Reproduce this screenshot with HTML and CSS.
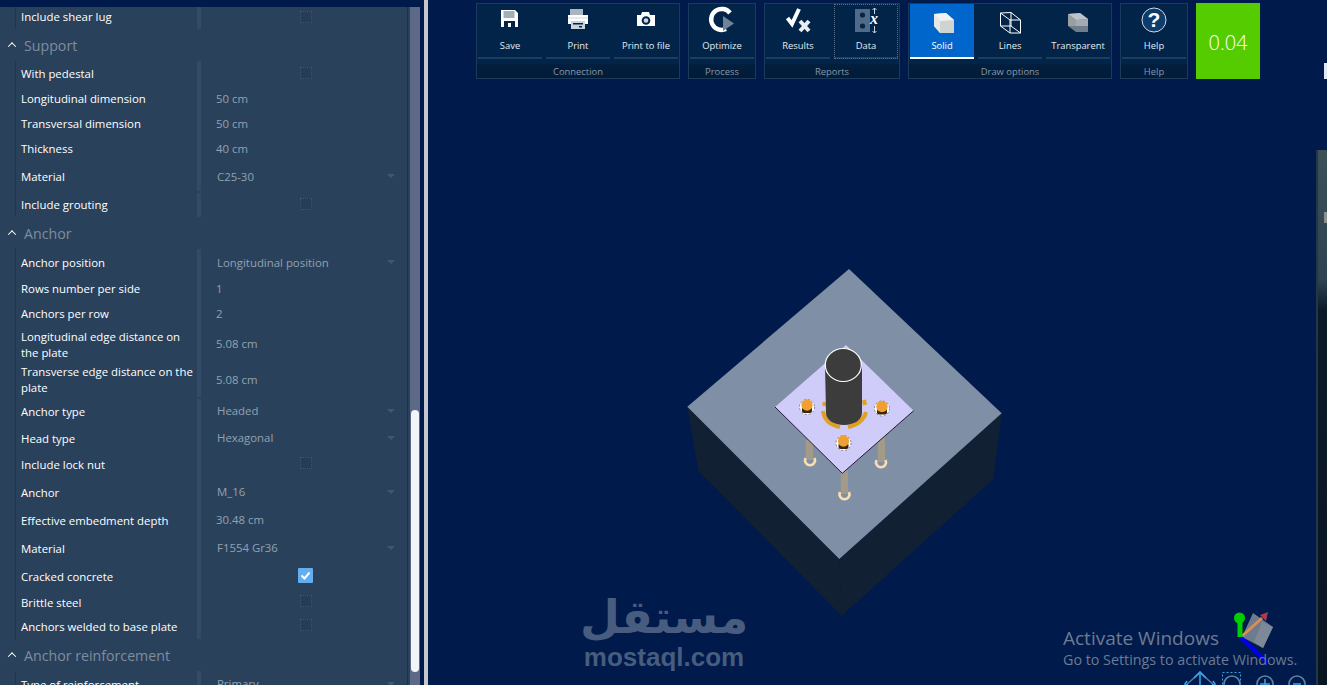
FILE: index.html
```html
<!DOCTYPE html>
<html lang="en">
<head>
<meta charset="utf-8">
<title>Base plate design</title>
<link rel="stylesheet" href="styles.css">
</head>
<body>
<div class="app">
  <aside class="panel">
    <div class="panel-body">
      <div class="props">
        <div class="row h22 up"><div class="label">Include shear lug</div><div class="value"><span class="check"></span></div></div>
      </div>
      <div class="section"><span class="chev"></span><span>Support</span></div>
      <div class="props">
        <div class="row h26"><div class="label">With pedestal</div><div class="value"><span class="check"></span></div></div>
        <div class="row h25 up-label"><div class="label">Longitudinal dimension</div><div class="value">50 cm</div></div>
        <div class="row h25 up-label"><div class="label">Transversal dimension</div><div class="value">50 cm</div></div>
        <div class="row h25 up-label"><div class="label">Thickness</div><div class="value">40 cm</div></div>
        <div class="row h29"><div class="label">Material</div><div class="value drop flat">C25-30</div></div>
        <div class="row h26 down"><div class="label">Include grouting</div><div class="value"><span class="check"></span></div></div>
      </div>
      <div class="section"><span class="chev"></span><span>Anchor</span></div>
      <div class="props">
        <div class="row h28"><div class="label">Anchor position</div><div class="value drop flat">Longitudinal position</div></div>
        <div class="row h25 up-label"><div class="label">Rows number per side</div><div class="value">1</div></div>
        <div class="row h25 up-label"><div class="label">Anchors per row</div><div class="value">2</div></div>
        <div class="row h35"><div class="label">Longitudinal edge distance on the plate</div><div class="value">5.08 cm</div></div>
        <div class="row h35"><div class="label">Transverse edge distance on the plate</div><div class="value flat">5.08 cm</div></div>
        <div class="row h28 down"><div class="label">Anchor type</div><div class="value drop">Headed</div></div>
        <div class="row h27"><div class="label">Head type</div><div class="value drop">Hexagonal</div></div>
        <div class="row h26"><div class="label">Include lock nut</div><div class="value nudge"><span class="check"></span></div></div>
        <div class="row h29"><div class="label">Anchor</div><div class="value drop">M_16</div></div>
        <div class="row h28"><div class="label">Effective embedment depth</div><div class="value">30.48 cm</div></div>
        <div class="row h28"><div class="label">Material</div><div class="value drop">F1554 Gr36</div></div>
        <div class="row h27"><div class="label">Cracked concrete</div><div class="value"><span class="check on"><svg viewBox="0 0 15 15" width="15" height="15"><path d="M3.5 7.5l3 3 5-6" fill="none" stroke="#fff" stroke-width="2"/></svg></span></div></div>
        <div class="row h25"><div class="label">Brittle steel</div><div class="value nudge"><span class="check"></span></div></div>
        <div class="row h24"><div class="label">Anchors welded to base plate</div><div class="value nudge"><span class="check"></span></div></div>
      </div>
      <div class="section"><span class="chev"></span><span>Anchor reinforcement</span></div>
      <div class="props">
        <div class="row h28"><div class="label">Type of reinforcement</div><div class="value drop">Primary</div></div>
      </div>
    </div>
    <div class="track"><div class="thumb"></div></div>
  </aside>
  <div class="gap"></div>
  <div class="divider"></div>
  <main class="view">
    <svg class="scene" viewBox="428 0 899 685" aria-hidden="true">
      <polygon points="687.3,406.7 698.3,470.7 841.7,615.7 839.3,559" fill="#122033"/>
      <polygon points="1001.7,413.3 993.3,479 841.7,615.7 839.3,559" fill="#122033"/>
      <polygon points="849,269 1001.7,413.3 839.3,559 687.3,406.7" fill="#7f8fa5"/>
      <g fill="#a39a88">
        <rect x="805.7" y="440" width="7.3" height="20"/>
        <rect x="877.7" y="438" width="7.3" height="24"/>
        <rect x="840.7" y="470" width="7.3" height="24"/>
      </g>
      <g fill="none" stroke="#fddcb0" stroke-width="2.6">
        <path d="M805.5 458a5 5 0 1 0 9 0"/>
        <path d="M876.5 460a5 5 0 1 0 9 0"/>
        <path d="M840 492a5 5 0 1 0 9 0"/>
      </g>
      <polygon points="775,407 842.3,473.3 913.7,410.7 846,345" fill="#d0ccfa"/>
      <path d="M775 407L842.3 473.3L913.7 410.7" fill="none" stroke="#2a1a3a" stroke-width="1"/>
      <g fill="none" stroke="#dfa11e" stroke-width="4">
        <path d="M823 411c1 8 7 14 17 16"/>
        <path d="M848 427c9-2 16-7 18-15"/>
        <path d="M825 402l-1 4M864 400l1 5"/>
      </g>
      <path d="M825 365h37v48c0 7-8 12-18 12s-18-5-18-12z" fill="#3c3c3c"/>
      <ellipse cx="843.3" cy="365" rx="18" ry="16.5" fill="#3c3c3c" stroke="#fff" stroke-width="1.2"/>
      <g>
        <g>
          <circle cx="807" cy="407" r="7.5" fill="#fff" stroke="#222" stroke-width=".5" stroke-dasharray="2 2"/>
          <rect x="802" y="407" width="10" height="6" rx="2" fill="#3a2410"/>
          <circle cx="807" cy="405" r="5.7" fill="#f0a030"/>
        </g>
        <g>
          <circle cx="882" cy="408.5" r="7.5" fill="#fff" stroke="#222" stroke-width=".5" stroke-dasharray="2 2"/>
          <rect x="877" y="408.5" width="10" height="6" rx="2" fill="#3a2410"/>
          <circle cx="882" cy="406.5" r="5.7" fill="#f0a030"/>
        </g>
        <g>
          <circle cx="843.5" cy="443" r="7.5" fill="#fff" stroke="#222" stroke-width=".5" stroke-dasharray="2 2"/>
          <rect x="838.5" y="443" width="10" height="6" rx="2" fill="#3a2410"/>
          <circle cx="843.5" cy="441" r="5.7" fill="#f0a030"/>
        </g>
      </g>
      <polygon points="1253,613 1273,627 1263,648 1242,637" fill="#6f7a8c"/>
      <polygon points="1273,627 1263,648 1254,642 1262,622" fill="#7d8899"/>
      <path d="M1241 637L1262 618" stroke="#d88f50" stroke-width="3"/>
      <polygon points="1260,615 1268,612 1266,621" fill="#b03a50"/>
      <path d="M1240 637L1268 663" stroke="#0000ee" stroke-width="4"/>
      <path d="M1240 637V620" stroke="#00d000" stroke-width="5"/>
      <circle cx="1239.5" cy="618" r="5.5" fill="#00d000"/>
      <g fill="none" stroke="#60809f" stroke-width="1.6">
        <path d="M1187 684l13-11 13 11" stroke="#4c7aa6"/>
        <path d="M1200 672v13M1194 678l6-6 6 6M1187 681l-2 3 3 1M1213 681l2 3-3 1" stroke="#3aa0e0"/>
        <rect x="1222.5" y="672.5" width="18" height="14" stroke="#3aa0e0" stroke-dasharray="2 2" stroke-width="1"/>
        <circle cx="1232" cy="684" r="8"/>
        <circle cx="1265" cy="684" r="8"/>
        <path d="M1265 679v10M1260 684h10" stroke="#3aa0e0"/>
        <circle cx="1297" cy="684" r="8"/>
        <path d="M1293 684h8" stroke="#3aa0e0"/>
      </g>
    </svg>

    <div class="edge"></div>
    <div class="edge-glyph"></div>
    <div class="edge-glyph low"></div>

    <div class="toolbar">
      <section class="group">
        <div class="btns">
          <div class="btn"><svg class="ico" viewBox="0 0 40 32"><path d="M11 4h14l3 3v14H11z" fill="#fff"/><rect x="13.500" y="5" width="11" height="7" fill="#9fb0b8"/><rect x="14" y="15" width="11" height="6" fill="#022448"/><rect x="18" y="17" width="3" height="4" fill="#fff"/></svg><span>Save</span></div>
          <div class="btn"><svg class="ico" viewBox="0 0 40 32"><rect x="12" y="3" width="13" height="6" fill="#a9b6bf"/><path d="M10 9h20v9H10z" fill="#fff"/><path d="M10 11h20v2H10z" fill="#e6ebef"/><rect x="13" y="15" width="14" height="8" fill="#c8d3da"/><rect x="15" y="17" width="10" height="1.500" fill="#022448"/><rect x="21" y="20" width="3" height="1.500" fill="#022448"/></svg><span>Print</span></div>
          <div class="btn"><svg class="ico" viewBox="0 0 40 32"><path d="M11 9h4l1-3h7l1 3h5v11H11z" fill="#fff"/><circle cx="20" cy="14.500" r="4.300" fill="#022448"/><circle cx="20" cy="14.500" r="2.300" fill="#cdd6dc"/></svg><span>Print to file</span></div>
        </div>
        <div class="foot">Connection</div>
      </section>
      <section class="group">
        <div class="btns">
          <div class="btn"><svg class="ico" viewBox="0 0 40 32"><path d="M28 7A10.500 10.500 0 1 0 24 23" fill="none" stroke="#fff" stroke-width="4.500"/><path d="M21 10v15l11-7.500z" fill="#6f8499"/></svg><span>Optimize</span></div>
        </div>
        <div class="foot">Process</div>
      </section>
      <section class="group">
        <div class="btns">
          <div class="btn"><svg class="ico" viewBox="0 0 40 32"><path d="M9.500 12l4.500 6L21 3" fill="none" stroke="#fff" stroke-width="4"/><path d="M22 15l9 10M31 15l-9 10" stroke="#e8edf1" stroke-width="4"/></svg><span>Results</span></div>
          <div class="btn dotted"><svg class="ico" viewBox="0 0 40 32"><rect x="9" y="3" width="15" height="23" fill="#4d6b8c"/><circle cx="16.500" cy="9" r="2.600" fill="#0e2238"/><circle cx="16.500" cy="20" r="2.600" fill="#0e2238"/><path d="M28.500 2v6M28.500 20v7M26.500 4l2-2 2 2M26.500 25l2 2 2-2" fill="none" stroke="#c6d2dc" stroke-width="1"/><text x="28" y="18" class="ix">x</text></svg><span>Data</span></div>
        </div>
        <div class="foot">Reports</div>
      </section>
      <section class="group">
        <div class="btns">
          <div class="btn active"><svg class="ico" viewBox="0 0 40 32"><polygon points="12,8 24,7 32,14 32,27 18,27 12,20" fill="#cfd4d2"/><polygon points="12,8 24,7 32,14 18,15" fill="#f1f3f3"/><polygon points="12,8 18,15 18,27 12,20" fill="#e6e8e8"/></svg><span>Solid</span></div>
          <div class="btn"><svg class="ico" viewBox="0 0 40 32"><g fill="none" stroke="#fff" stroke-width="1"><polygon points="10.500,7 21,6.500 30.500,14 30.500,27 20,27 10.500,20"/><path d="M10.500 7L20 14v13M20 14h10.500M21 6.500V20M10.500 20H21l9.500 7"/></g></svg><span>Lines</span></div>
          <div class="btn"><svg class="ico" viewBox="0 0 40 32"><polygon points="10,8 22,7 30,13 30,26 18,26 10,20" fill="#6f7d8d"/><polygon points="10,8 22,7 30,13 18,14" fill="#bcc3ca"/><polygon points="18,14 30,13 30,20 18,20" fill="#a3acb5"/><polygon points="10,8 18,14 18,20 10,20" fill="#98a09f"/></svg><span>Transparent</span></div>
        </div>
        <div class="foot">Draw options</div>
      </section>
      <section class="group">
        <div class="btns">
          <div class="btn"><svg class="ico" viewBox="0 0 40 32"><circle cx="20" cy="14" r="12" fill="#0d3c6c" stroke="#cfd9e2" stroke-width="1"/><text x="20" y="21" class="qm">?</text></svg><span>Help</span></div>
        </div>
        <div class="foot">Help</div>
      </section>
      <div class="score">0.04</div>
    </div>

    <div class="mark">
      <div class="mark-ar" lang="ar" dir="rtl">مستقل</div>
      <div class="mark-en">mostaql.com</div>
    </div>
    <div class="activate">
      <div class="a1">Activate Windows</div>
      <div class="a2">Go to Settings to activate Windows.</div>
    </div>
  </main>
</div>
</body>
</html>
```
FILE: styles.css
```css
* { box-sizing: border-box; }
html, body { margin: 0; height: 100%; overflow: hidden; background: #001a4b; }
body { font-family: "Open Sans", "Noto Sans", sans-serif; color: #fff; }

.app { display: flex; width: 1327px; height: 685px; overflow: hidden; }

/* left panel */
.panel { flex: none; width: 420px; height: 685px; border-top: 7px solid #001a4b; display: flex; background: #2a415b; overflow: hidden; }
.panel-body { flex: none; width: 408px; border-right: 1px solid #1c3049; margin-right: 2px; }
.track { flex: none; width: 10px; background: #5c6a87; }
.thumb { width: 8px; height: 262px; margin: 403px 0 0 1px; background: #f2f5f9; border-radius: 4px; }
.gap { flex: none; width: 4px; background: #001a4b; }
.divider { flex: none; width: 4px; background: #c4c8cc; }

.section { display: flex; align-items: center; height: 32px; padding-left: 9px; gap: 9px; font-size: 14.200px; color: #7f8d9e; }
.chev { width: 6px; height: 6px; border-left: 1.6px solid #fff; border-top: 1.6px solid #fff; transform: rotate(45deg) translate(1px, 1px); }

.props { margin-left: 15px; border-left: 1px solid #21354d; }
.row { display: grid; grid-template-columns: 181px 1fr; font-size: 11.400px; line-height: 16px; }
.h22 { height: 22px; } .h24 { height: 24px; } .h25 { height: 25px; } .h26 { height: 26px; }
.h27 { height: 27px; } .h28 { height: 28px; } .h29 { height: 29px; } .h35 { height: 35px; }
.label { display: flex; align-items: center; padding-left: 5px; color: #fff; }
.up-label .label { padding-bottom: 2px; }
.up .label { padding-bottom: 2px; }
.value { position: relative; display: flex; align-items: center; border-left: 4px solid #324c68; padding-left: 15px; color: #92a1b1; padding-bottom: 2px; }
.down { padding-top: 2px; }
.drop { padding-left: 16px; }
.flat { padding-bottom: 0; }
.nudge { padding-bottom: 4px; }
.drop::after { content: ""; position: absolute; left: 186px; top: 50%; margin-top: -3px; border: 4px solid transparent; border-top: 4px solid #3f5873; border-bottom: 0; }
.check { width: 12px; height: 12px; margin-left: 84px; border: 1px dotted #3d5470; background: #273c56; }
.check.on { width: 15px; height: 15px; margin-left: 82px; border: 0; background: #62aeef; border-radius: 1px; display: block; }
.check svg { display: block; }

/* viewport */
.view { position: relative; flex: 1; height: 685px; overflow: hidden; background: #001a4b; }
.scene { position: absolute; left: 0; top: 0; width: 899px; height: 685px; }
.edge { position: absolute; left: 888px; top: 150px; width: 11px; height: 535px; background: linear-gradient(#3c5058 0, #2e4350 130px, #0c1a28 160px, #0a1522 100%); border-left: 2px solid #22384a; }
.edge-glyph { position: absolute; left: 896px; top: 63px; width: 3px; height: 16px; background: #dfe9f5; }
.edge-glyph.low { top: 212px; height: 11px; background: #8c8f90; }

.toolbar { position: relative; display: flex; gap: 8px; padding: 3px 0 0 48px; align-items: flex-start; }
.group { display: flex; flex-direction: column; height: 76px; border: 1px solid #1c3a5c; background: #022448; }
.btns { display: flex; gap: 4px; padding-left: 1px; padding-right: 1px; height: 60px; }
.btn { width: 64px; height: 55px; display: flex; flex-direction: column; align-items: center; border-bottom: 2px solid #1e3c5c; font-size: 9.400px; color: #e4ebf1; }
.btn span { line-height: 13px; margin-top: 1px; }
.ico { display: block; width: 40px; height: 32px; margin-top: 2px; }
.active { background: #0066cc; border-bottom-color: #fff; color: #fff; }
.dotted { outline: 1px dotted #5a6f85; outline-offset: -1px; }
.foot { flex: 1; padding-top: 2px; background: linear-gradient(#021f40, #021c38); text-align: center; font-size: 9.400px; line-height: 12px; color: #8798aa; }
.ix { font-family: "Liberation Serif", serif; font-style: italic; font-weight: 700; font-size: 16px; fill: #fff; text-anchor: middle; }
.qm { font-family: "Liberation Sans", sans-serif; font-weight: 700; font-size: 21px; fill: #fff; text-anchor: middle; }
.score { width: 64px; height: 76px; background: #55cc00; font-size: 20px; font-weight: 300; line-height: 79px; text-align: center; color: #fff; }

.mark { position: absolute; left: 148px; top: 590px; width: 176px; text-align: center; color: #475c7e; }
.mark-ar { font-family: "DejaVu Sans", sans-serif; font-weight: 700; font-size: 46px; line-height: 54px; }
.mark-en { font-family: "Liberation Sans", sans-serif; font-weight: 700; font-size: 26px; line-height: 26px; }

.activate { position: absolute; left: 635px; top: 626px; color: #6d7b90; white-space: nowrap; }
.a1 { font-size: 19px; line-height: 24px; }
.a2 { font-size: 14.300px; line-height: 20px; }
```
